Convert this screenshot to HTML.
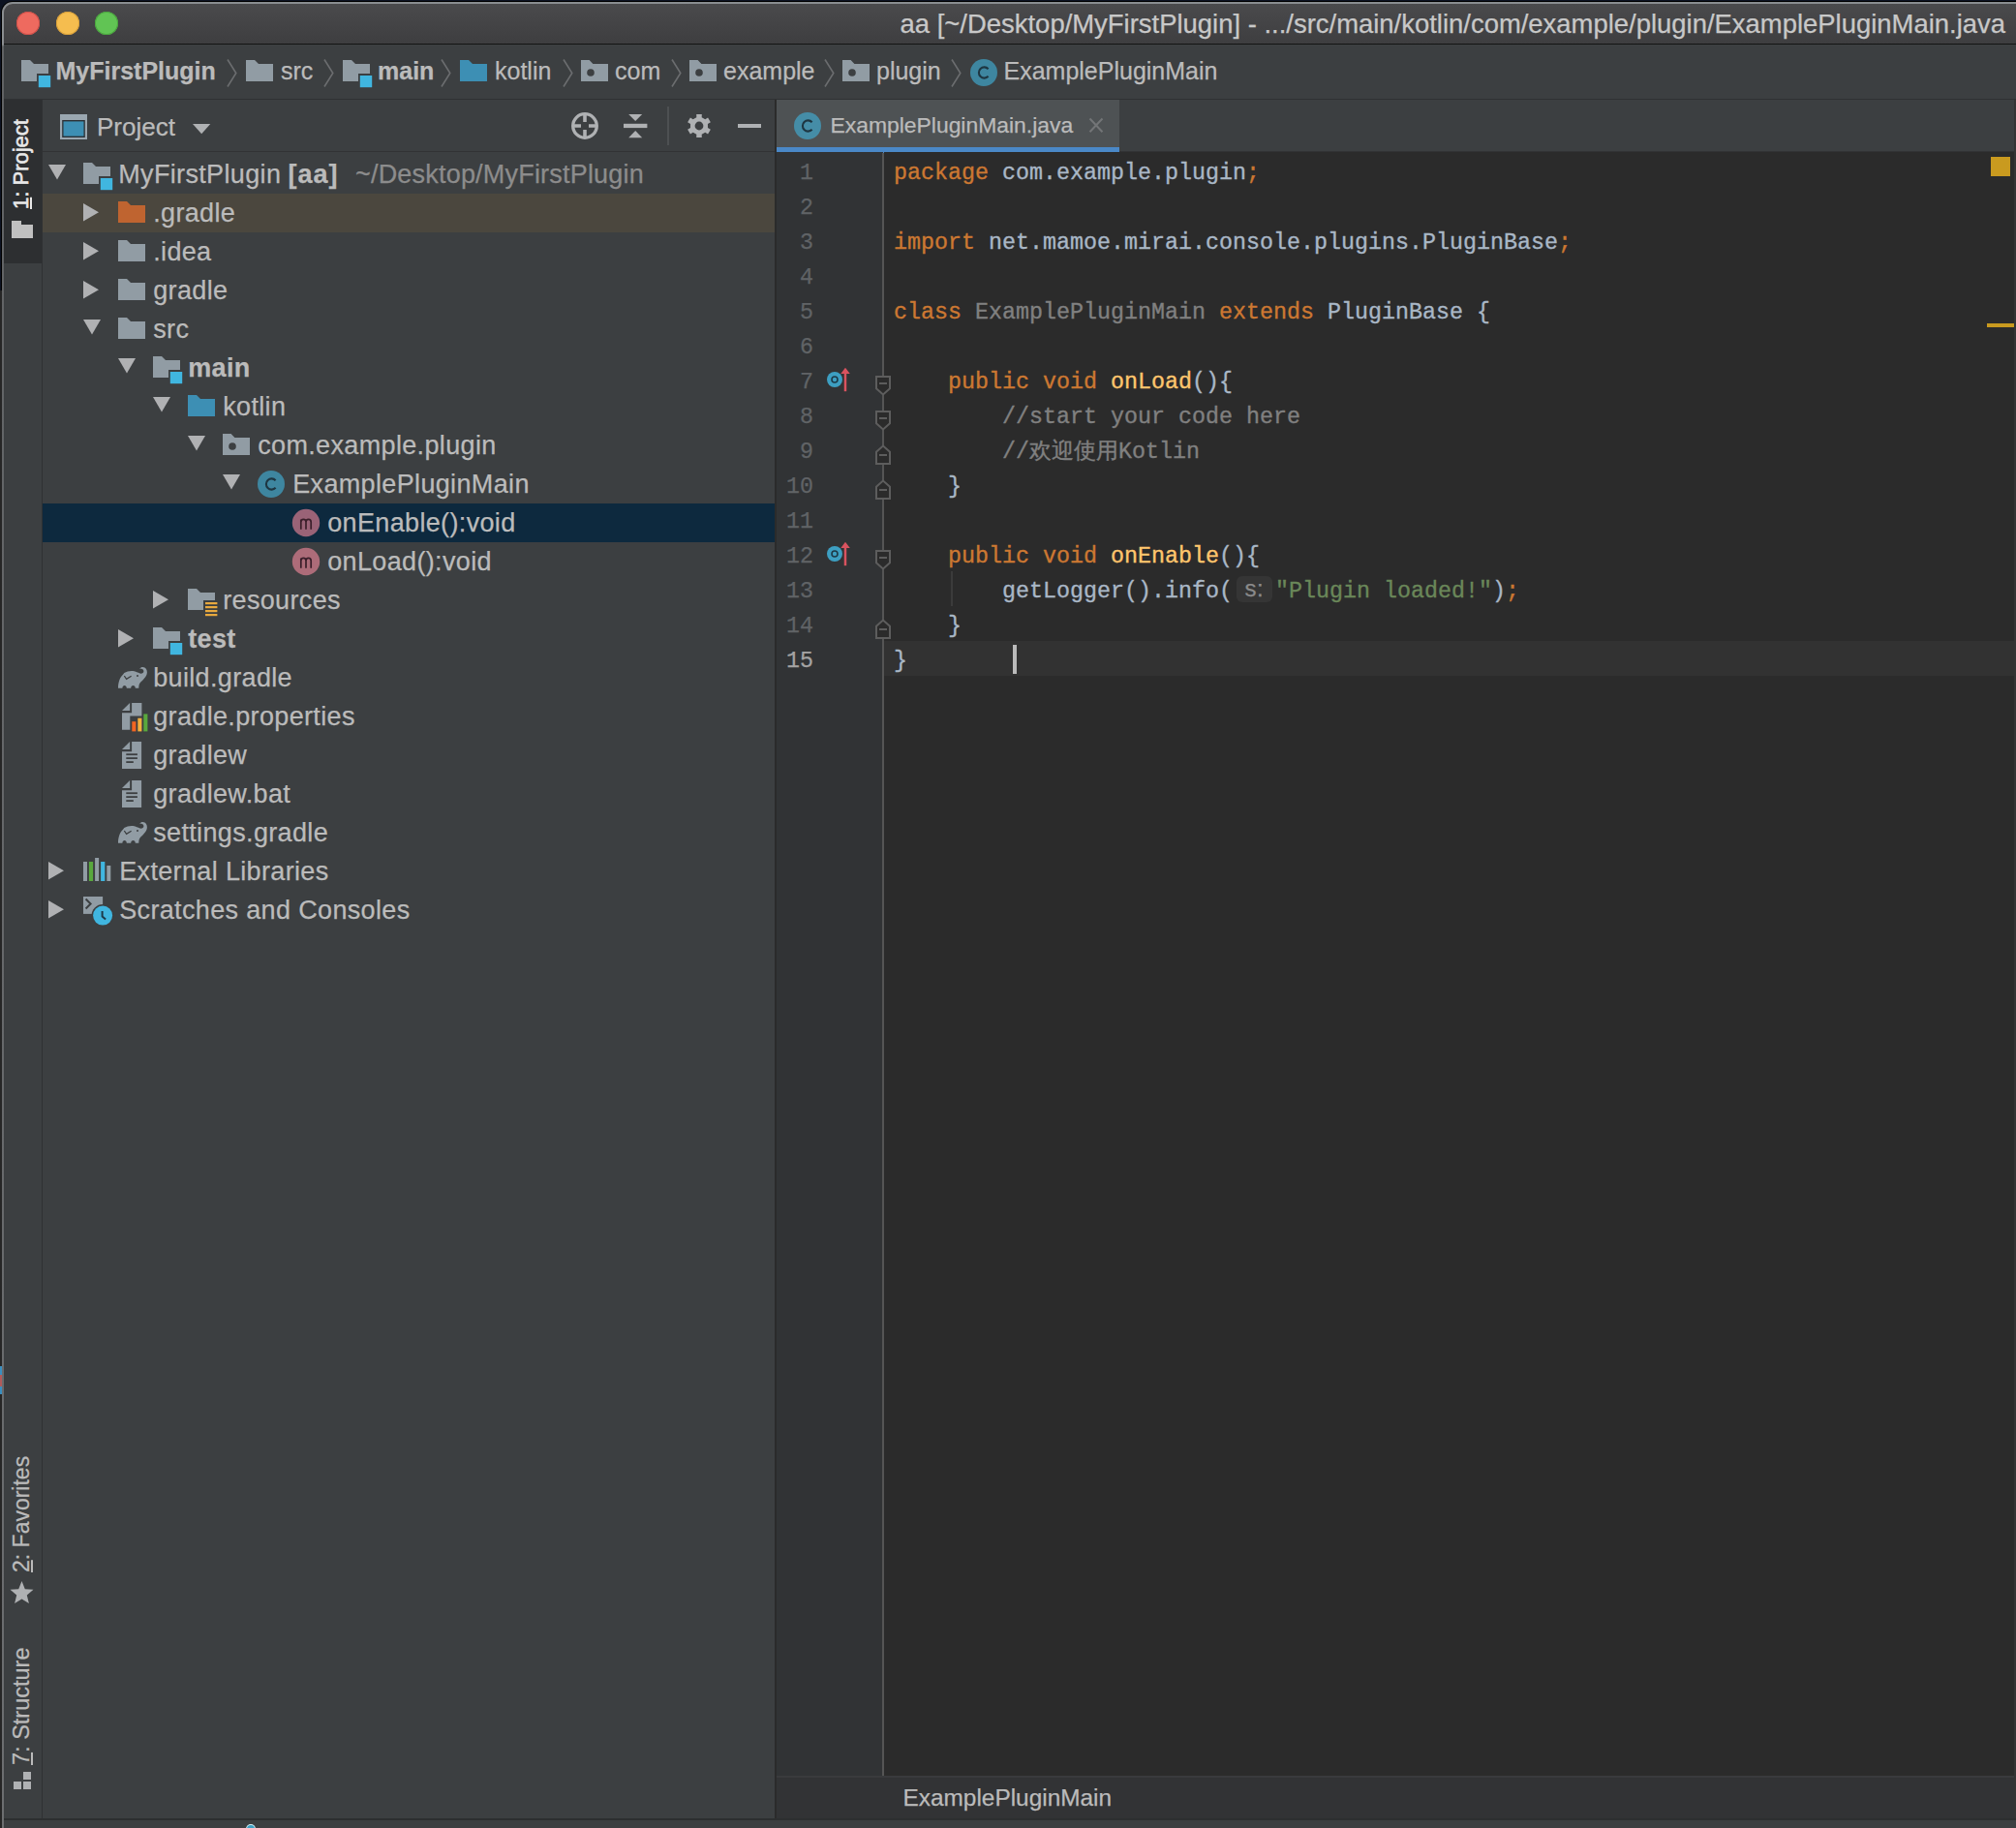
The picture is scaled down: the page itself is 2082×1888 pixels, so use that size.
<!DOCTYPE html>
<html><head><meta charset="utf-8"><style>
*{margin:0;padding:0;box-sizing:border-box}
html,body{width:2082px;height:1888px;overflow:hidden;background:#0d1322}
body{position:relative;font-family:"Liberation Sans",sans-serif;color:#bbbbbb}
.a{position:absolute}
.t{position:absolute;white-space:pre;line-height:1;-webkit-text-stroke:0.25px currentColor}
svg{position:absolute;overflow:visible}
.b{font-weight:bold}
.mono{font-family:"Liberation Mono",monospace}
.k{color:#cc7832}.m{color:#ffc66d}.s{color:#6a8759}.c{color:#808080}.u{color:#808080}
</style></head><body>
<div class="a" style="left:1px;top:1px;width:2081px;height:1887px;background:#000;border-radius:12px 0 0 0"></div>
<div class="a" style="left:2px;top:2px;width:2080px;height:1886px;background:linear-gradient(#8a8d90 0px,#8a8d90 44px,#606264 46px,#6c6e70 1888px);border-radius:11px 0 0 0"></div>
<div class="a" style="left:0px;top:300px;width:1.5px;height:1588px;background:#262626;"></div>
<div class="a" style="left:0px;top:1411px;width:1.5px;height:9px;background:#3a8fc0;"></div>
<div class="a" style="left:0px;top:1420px;width:1.5px;height:12px;background:#b05a5a;"></div>
<div class="a" style="left:0px;top:1432px;width:1.5px;height:8px;background:#3a8fc0;"></div>
<div class="a" style="left:4px;top:4px;width:2078px;height:40.5px;background:linear-gradient(#4a4a4c,#3e3e40);border-radius:9px 0 0 0"></div>
<div class="a" style="left:4px;top:44.5px;width:2078px;height:1.5px;background:#141414;"></div>
<div class="a" style="left:4px;top:46px;width:2076px;height:56px;background:#3c3f41;"></div>
<div class="a" style="left:2080px;top:46px;width:2px;height:57px;background:#3c3f41;"></div>
<div class="a" style="left:4px;top:102px;width:2078px;height:1px;background:#2f3133;"></div>
<div class="a" style="left:4px;top:103px;width:39px;height:1776px;background:#3c3f41;"></div>
<div class="a" style="left:4px;top:103px;width:39px;height:169px;background:#2d2f31;"></div>
<div class="a" style="left:43px;top:103px;width:1px;height:1776px;background:#2f3133;"></div>
<div class="a" style="left:44px;top:103px;width:756px;height:1776px;background:#3c3f41;"></div>
<div class="a" style="left:44px;top:155.5px;width:756px;height:1.5px;background:#323335;"></div>
<div class="a" style="left:800px;top:103px;width:2px;height:1776px;background:#2b2b2b;"></div>
<div class="a" style="left:802px;top:103px;width:1278px;height:54px;background:#3c3f41;"></div>
<div class="a" style="left:802px;top:155.5px;width:1278px;height:1.5px;background:#323335;"></div>
<div class="a" style="left:802px;top:103px;width:354px;height:49px;background:#4e5254;"></div>
<div class="a" style="left:802px;top:152px;width:354px;height:6px;background:#4a88c7;"></div>
<div class="a" style="left:802px;top:157px;width:110px;height:1677px;background:#313335;"></div>
<div class="a" style="left:913px;top:157px;width:1167px;height:1677px;background:#2b2b2b;"></div>
<div class="a" style="left:911px;top:158px;width:2px;height:1676px;background:#555555;"></div>
<div class="a" style="left:2080px;top:103px;width:2px;height:1776px;background:#343434;"></div>
<div class="a" style="left:802px;top:1834px;width:1278px;height:45px;background:#323335;"></div>
<div class="a" style="left:802px;top:1834px;width:1278px;height:2px;background:#3a3b3d;"></div>
<div class="a" style="left:4px;top:1879px;width:2078px;height:9px;background:#3c3f41;"></div>
<div class="a" style="left:4px;top:1878px;width:2078px;height:2px;background:#2d2f30;"></div>
<div class="a" style="left:17px;top:12px;width:24px;height:24px;background:#ee6a5f;border-radius:50%;box-shadow:inset 0 0 0 1px #d0504a"></div>
<div class="a" style="left:58px;top:12px;width:24px;height:24px;background:#f5bd4f;border-radius:50%;box-shadow:inset 0 0 0 1px #d9a03a"></div>
<div class="a" style="left:98px;top:12px;width:24px;height:24px;background:#61c454;border-radius:50%;box-shadow:inset 0 0 0 1px #4aa53e"></div>
<div class="t" style="left:0.00px;top:10.76px;font-size:27.45px;color:#c8c8c8;font-weight:normal;left:auto;right:11px">aa [~/Desktop/MyFirstPlugin] - .../src/main/kotlin/com/example/plugin/ExamplePluginMain.java</div>
<svg style="left:22px;top:62px" width="31" height="29" viewBox="0 0 31 29"><path d="M0 0H9L13 4H28V22H0Z" fill="#919ca4"/><rect x="16" y="14" width="15.5" height="15.5" fill="#3c3f41"/><rect x="17.8" y="16" width="12.4" height="12.2" fill="#40b6e0"/></svg>
<div class="t" style="left:57.50px;top:60.84px;font-size:25px;color:#bbbbbb;font-weight:bold;">MyFirstPlugin</div>
<svg style="left:234px;top:60.5px" width="11" height="29" viewBox="0 0 11 29"><path d="M1 0.5L9.8 14.5L1 28.5" fill="none" stroke="#6b6d6f" stroke-width="1.6"/></svg>
<svg style="left:254px;top:62px" width="28" height="22" viewBox="0 0 28 22"><path d="M0 0H9L13 4H28V22H0Z" fill="#919ca4"/></svg>
<div class="t" style="left:290.00px;top:60.84px;font-size:25px;color:#bbbbbb;font-weight:normal;">src</div>
<svg style="left:334px;top:60.5px" width="11" height="29" viewBox="0 0 11 29"><path d="M1 0.5L9.8 14.5L1 28.5" fill="none" stroke="#6b6d6f" stroke-width="1.6"/></svg>
<svg style="left:354px;top:62px" width="31" height="29" viewBox="0 0 31 29"><path d="M0 0H9L13 4H28V22H0Z" fill="#919ca4"/><rect x="16" y="14" width="15.5" height="15.5" fill="#3c3f41"/><rect x="17.8" y="16" width="12.4" height="12.2" fill="#40b6e0"/></svg>
<div class="t" style="left:390.00px;top:60.84px;font-size:25px;color:#bbbbbb;font-weight:bold;">main</div>
<svg style="left:455px;top:60.5px" width="11" height="29" viewBox="0 0 11 29"><path d="M1 0.5L9.8 14.5L1 28.5" fill="none" stroke="#6b6d6f" stroke-width="1.6"/></svg>
<svg style="left:475px;top:62px" width="28" height="22" viewBox="0 0 28 22"><path d="M0 0H9L13 4H28V22H0Z" fill="#3d8fb4"/></svg>
<div class="t" style="left:511.00px;top:60.84px;font-size:25px;color:#bbbbbb;font-weight:normal;">kotlin</div>
<svg style="left:581px;top:60.5px" width="11" height="29" viewBox="0 0 11 29"><path d="M1 0.5L9.8 14.5L1 28.5" fill="none" stroke="#6b6d6f" stroke-width="1.6"/></svg>
<svg style="left:600px;top:62px" width="28" height="22" viewBox="0 0 28 22"><path d="M0 0H8.6L12.4 3.9H28V22H0Z" fill="#919ca4"/><circle cx="10" cy="13" r="3.8" fill="#3c3f41"/></svg>
<div class="t" style="left:635.00px;top:60.84px;font-size:25px;color:#bbbbbb;font-weight:normal;">com</div>
<svg style="left:692.5px;top:60.5px" width="11" height="29" viewBox="0 0 11 29"><path d="M1 0.5L9.8 14.5L1 28.5" fill="none" stroke="#6b6d6f" stroke-width="1.6"/></svg>
<svg style="left:712px;top:62px" width="28" height="22" viewBox="0 0 28 22"><path d="M0 0H8.6L12.4 3.9H28V22H0Z" fill="#919ca4"/><circle cx="10" cy="13" r="3.8" fill="#3c3f41"/></svg>
<div class="t" style="left:747.00px;top:60.84px;font-size:25px;color:#bbbbbb;font-weight:normal;">example</div>
<svg style="left:851px;top:60.5px" width="11" height="29" viewBox="0 0 11 29"><path d="M1 0.5L9.8 14.5L1 28.5" fill="none" stroke="#6b6d6f" stroke-width="1.6"/></svg>
<svg style="left:870px;top:62px" width="28" height="22" viewBox="0 0 28 22"><path d="M0 0H8.6L12.4 3.9H28V22H0Z" fill="#919ca4"/><circle cx="10" cy="13" r="3.8" fill="#3c3f41"/></svg>
<div class="t" style="left:905.00px;top:60.84px;font-size:25px;color:#bbbbbb;font-weight:normal;">plugin</div>
<svg style="left:982px;top:60.5px" width="11" height="29" viewBox="0 0 11 29"><path d="M1 0.5L9.8 14.5L1 28.5" fill="none" stroke="#6b6d6f" stroke-width="1.6"/></svg>
<svg style="left:1002px;top:61px" width="28" height="28" viewBox="0 0 28 28"><circle cx="14" cy="14" r="14" fill="#40b6e0" fill-opacity="0.6"/><path d="M18.6 10.2A5.6 5.6 0 1 0 18.6 17.8" fill="none" stroke="#1e3642" stroke-width="2.1"/></svg>
<div class="t" style="left:1036.50px;top:60.84px;font-size:25px;color:#bbbbbb;font-weight:normal;">ExamplePluginMain</div>
<svg style="left:62px;top:118px" width="28" height="26" viewBox="0 0 28 26"><rect x="0" y="0" width="28" height="26" fill="#9aa7b0"/><rect x="2.2" y="6" width="23.6" height="18" fill="#2b3035"/><rect x="3.5" y="7.4" width="21" height="15.2" fill="#3d8fb4"/></svg>
<div class="t" style="left:100.00px;top:117.69px;font-size:26px;color:#bbbbbb;font-weight:normal;">Project</div>
<svg style="left:198.7px;top:127.8px" width="18.3" height="10.2" viewBox="0 0 18.3 10.2"><path d="M0 0H18.3L9.15 10.2Z" fill="#afb1b3"/></svg>
<svg style="left:590px;top:116px" width="28" height="28" viewBox="0 0 28 28"><circle cx="14" cy="14" r="12.3" fill="none" stroke="#afb1b3" stroke-width="3.3"/><path d="M14 2V10M14 18V26M2 14H10M18 14H26" stroke="#afb1b3" stroke-width="3.6"/></svg>
<svg style="left:643.8px;top:117.9px" width="24.4" height="24.2" viewBox="0 0 24.4 24.2"><path d="M5.2 0H19.2L12.2 7Z" fill="#afb1b3"/><rect x="0" y="9.8" width="24.4" height="4.3" fill="#afb1b3"/><path d="M5.2 24.2H19.2L12.2 17.1Z" fill="#afb1b3"/></svg>
<div class="a" style="left:688.5px;top:110px;width:2px;height:40px;background:#4d5052;"></div>
<svg style="left:708px;top:116px" width="28" height="28" viewBox="0 0 28 28"><path d="M11.21 1.92 L16.79 1.92 L16.69 5.20 L20.27 7.27 L23.07 5.54 L25.86 10.37 L22.96 11.93 L22.96 16.07 L25.86 17.63 L23.07 22.46 L20.27 20.73 L16.69 22.80 L16.79 26.08 L11.21 26.08 L11.31 22.80 L7.73 20.73 L4.93 22.46 L2.14 17.63 L5.04 16.07 L5.04 11.93 L2.14 10.37 L4.93 5.54 L7.73 7.27 L11.31 5.20Z" fill="#afb1b3"/><circle cx="14" cy="14" r="4.4" fill="#3c3f41"/></svg>
<div class="a" style="left:762px;top:127.7px;width:24.2px;height:4.3px;background:#afb1b3;"></div>
<svg style="left:820px;top:115.69999999999999px" width="28" height="28" viewBox="0 0 28 28"><circle cx="14" cy="14" r="14" fill="#40b6e0" fill-opacity="0.6"/><path d="M18.6 10.2A5.6 5.6 0 1 0 18.6 17.8" fill="none" stroke="#1e3642" stroke-width="2.1"/></svg>
<div class="t" style="left:857.50px;top:118.22px;font-size:22.9px;color:#bbbbbb;font-weight:normal;">ExamplePluginMain.java</div>
<svg style="left:1125px;top:122.4px" width="14" height="14.7" viewBox="0 0 14 14.7"><path d="M0.5 0.5L13.5 14.2M13.5 0.5L0.5 14.2" stroke="#737577" stroke-width="2"/></svg>
<div class="t" style="left:10.91px;top:216px;font-size:22px;color:#e8e8e8;-webkit-text-stroke:0.6px #e8e8e8;transform-origin:0 0;transform:rotate(-90deg);line-height:1"><span style="text-decoration:underline">1</span>: Project</div>
<svg style="left:12px;top:228px" width="22" height="18" viewBox="0 0 22 18"><path d="M0 0H10V4H22V18H0Z" fill="#c0c0c0"/></svg>
<div class="t" style="left:10.80px;top:1624px;font-size:23px;color:#bbbbbb;transform-origin:0 0;transform:rotate(-90deg);line-height:1"><span style="text-decoration:underline">2</span>: Favorites</div>
<svg style="left:10px;top:1633px" width="25" height="24" viewBox="0 0 25 24"><path d="M12.5 0L15.8 8.2L24.5 8.8L17.8 14.4L19.9 23L12.5 18.4L5.1 23L7.2 14.4L0.5 8.8L9.2 8.2Z" fill="#afb1b3"/></svg>
<div class="t" style="left:10.74px;top:1822.5px;font-size:23.5px;color:#bbbbbb;transform-origin:0 0;transform:rotate(-90deg);line-height:1"><span style="text-decoration:underline">7</span>: Structure</div>
<svg style="left:14px;top:1828px" width="19" height="22" viewBox="0 0 19 22"><rect x="0" y="12" width="8" height="8" fill="#afb1b3"/><rect x="10" y="2" width="8" height="8" fill="#afb1b3"/><rect x="10" y="12" width="8" height="8" fill="#afb1b3"/></svg>
<div class="a" style="left:44px;top:200px;width:756px;height:40px;background:#4b473e;"></div>
<div class="a" style="left:44px;top:520px;width:756px;height:40px;background:#0d293e;"></div>
<svg style="left:50px;top:170.3px" width="18" height="15.5" viewBox="0 0 18 15.5"><path d="M0 0H18L9 15.5Z" fill="#b0b1b3"/></svg>
<svg style="left:86px;top:168px" width="31" height="29" viewBox="0 0 31 29"><path d="M0 0H9L13 4H28V22H0Z" fill="#919ca4"/><rect x="16" y="14" width="15.5" height="15.5" fill="#3c3f41"/><rect x="17.8" y="16" width="12.4" height="12.2" fill="#40b6e0"/></svg>
<div class="t" style="left:122.20px;top:167.44px;font-size:27px;color:#bbbbbb;font-weight:normal;letter-spacing:0.35px;">MyFirstPlugin</div>
<div class="t" style="left:297.50px;top:167.44px;font-size:27px;color:#bbbbbb;font-weight:bold;letter-spacing:1px">[aa]</div>
<div class="t" style="left:367.00px;top:167.44px;font-size:27px;color:#8c8c8c;font-weight:normal;letter-spacing:0.2px">~/Desktop/MyFirstPlugin</div>
<svg style="left:86px;top:209.8px" width="16" height="18.4" viewBox="0 0 16 18.4"><path d="M0 0L16 9.2L0 18.4Z" fill="#b0b1b3"/></svg>
<svg style="left:122px;top:208px" width="28" height="22" viewBox="0 0 28 22"><path d="M0 0H9L13 4H28V22H0Z" fill="#bf6430"/></svg>
<div class="t" style="left:158.20px;top:207.44px;font-size:27px;color:#bbbbbb;font-weight:normal;letter-spacing:0.35px;">.gradle</div>
<svg style="left:86px;top:249.8px" width="16" height="18.4" viewBox="0 0 16 18.4"><path d="M0 0L16 9.2L0 18.4Z" fill="#b0b1b3"/></svg>
<svg style="left:122px;top:248px" width="28" height="22" viewBox="0 0 28 22"><path d="M0 0H9L13 4H28V22H0Z" fill="#919ca4"/></svg>
<div class="t" style="left:158.20px;top:247.44px;font-size:27px;color:#bbbbbb;font-weight:normal;letter-spacing:0.35px;">.idea</div>
<svg style="left:86px;top:289.8px" width="16" height="18.4" viewBox="0 0 16 18.4"><path d="M0 0L16 9.2L0 18.4Z" fill="#b0b1b3"/></svg>
<svg style="left:122px;top:288px" width="28" height="22" viewBox="0 0 28 22"><path d="M0 0H9L13 4H28V22H0Z" fill="#919ca4"/></svg>
<div class="t" style="left:158.20px;top:287.44px;font-size:27px;color:#bbbbbb;font-weight:normal;letter-spacing:0.35px;">gradle</div>
<svg style="left:86px;top:330.3px" width="18" height="15.5" viewBox="0 0 18 15.5"><path d="M0 0H18L9 15.5Z" fill="#b0b1b3"/></svg>
<svg style="left:122px;top:328px" width="28" height="22" viewBox="0 0 28 22"><path d="M0 0H9L13 4H28V22H0Z" fill="#919ca4"/></svg>
<div class="t" style="left:158.20px;top:327.44px;font-size:27px;color:#bbbbbb;font-weight:normal;letter-spacing:0.35px;">src</div>
<svg style="left:122px;top:370.3px" width="18" height="15.5" viewBox="0 0 18 15.5"><path d="M0 0H18L9 15.5Z" fill="#b0b1b3"/></svg>
<svg style="left:158px;top:368px" width="31" height="29" viewBox="0 0 31 29"><path d="M0 0H9L13 4H28V22H0Z" fill="#919ca4"/><rect x="16" y="14" width="15.5" height="15.5" fill="#3c3f41"/><rect x="17.8" y="16" width="12.4" height="12.2" fill="#40b6e0"/></svg>
<div class="t" style="left:194.20px;top:367.44px;font-size:27px;color:#bbbbbb;font-weight:bold;letter-spacing:0.35px;">main</div>
<svg style="left:158px;top:410.3px" width="18" height="15.5" viewBox="0 0 18 15.5"><path d="M0 0H18L9 15.5Z" fill="#b0b1b3"/></svg>
<svg style="left:194px;top:408px" width="28" height="22" viewBox="0 0 28 22"><path d="M0 0H9L13 4H28V22H0Z" fill="#3d8fb4"/></svg>
<div class="t" style="left:230.20px;top:407.44px;font-size:27px;color:#bbbbbb;font-weight:normal;letter-spacing:0.35px;">kotlin</div>
<svg style="left:194px;top:450.3px" width="18" height="15.5" viewBox="0 0 18 15.5"><path d="M0 0H18L9 15.5Z" fill="#b0b1b3"/></svg>
<svg style="left:230px;top:448px" width="28" height="22" viewBox="0 0 28 22"><path d="M0 0H8.6L12.4 3.9H28V22H0Z" fill="#919ca4"/><circle cx="10" cy="13" r="3.8" fill="#3c3f41"/></svg>
<div class="t" style="left:266.20px;top:447.44px;font-size:27px;color:#bbbbbb;font-weight:normal;letter-spacing:0.35px;">com.example.plugin</div>
<svg style="left:230px;top:490.3px" width="18" height="15.5" viewBox="0 0 18 15.5"><path d="M0 0H18L9 15.5Z" fill="#b0b1b3"/></svg>
<svg style="left:266px;top:486px" width="28" height="28" viewBox="0 0 28 28"><circle cx="14" cy="14" r="14" fill="#40b6e0" fill-opacity="0.6"/><path d="M18.6 10.2A5.6 5.6 0 1 0 18.6 17.8" fill="none" stroke="#1e3642" stroke-width="2.1"/></svg>
<div class="t" style="left:302.20px;top:487.44px;font-size:27px;color:#bbbbbb;font-weight:normal;letter-spacing:0.35px;">ExamplePluginMain</div>
<svg style="left:302px;top:526px" width="28" height="28" viewBox="0 0 28 28"><circle cx="14" cy="14" r="14.2" fill="#f98b9e" fill-opacity="0.6"/><path d="M6.6 20V9.6M6.6 12.5C6.6 10.5 7.6 9.6 9.2 9.6C10.8 9.6 11.8 10.5 11.8 12.5V20M11.8 12.5C11.8 10.5 12.8 9.6 14.4 9.6C16 9.6 17 10.5 17 12.5V20" transform="translate(2.2,0.8)" fill="none" stroke="#3b1f2a" stroke-width="1.7"/></svg>
<div class="t" style="left:338.20px;top:527.44px;font-size:27px;color:#bbbbbb;font-weight:normal;letter-spacing:0.35px;">onEnable():void</div>
<svg style="left:302px;top:566px" width="28" height="28" viewBox="0 0 28 28"><circle cx="14" cy="14" r="14.2" fill="#f98b9e" fill-opacity="0.6"/><path d="M6.6 20V9.6M6.6 12.5C6.6 10.5 7.6 9.6 9.2 9.6C10.8 9.6 11.8 10.5 11.8 12.5V20M11.8 12.5C11.8 10.5 12.8 9.6 14.4 9.6C16 9.6 17 10.5 17 12.5V20" transform="translate(2.2,0.8)" fill="none" stroke="#3b1f2a" stroke-width="1.7"/></svg>
<div class="t" style="left:338.20px;top:567.44px;font-size:27px;color:#bbbbbb;font-weight:normal;letter-spacing:0.35px;">onLoad():void</div>
<svg style="left:158px;top:610px" width="16" height="18.4" viewBox="0 0 16 18.4"><path d="M0 0L16 9.2L0 18.4Z" fill="#b0b1b3"/></svg>
<svg style="left:194px;top:608px" width="31" height="29" viewBox="0 0 31 29"><path d="M0 0H9L13 4H28V22H0Z" fill="#919ca4"/><rect x="16" y="12" width="16" height="18" fill="#3c3f41"/><g fill="#e8a93e"><rect x="18" y="14" width="12.4" height="2.2"/><rect x="18" y="18" width="12.4" height="2.2"/><rect x="18" y="22" width="12.4" height="2.2"/><rect x="18" y="26" width="12.4" height="2.2"/></g></svg>
<div class="t" style="left:230.20px;top:607.44px;font-size:27px;color:#bbbbbb;font-weight:normal;letter-spacing:0.35px;">resources</div>
<svg style="left:122px;top:649.8px" width="16" height="18.4" viewBox="0 0 16 18.4"><path d="M0 0L16 9.2L0 18.4Z" fill="#b0b1b3"/></svg>
<svg style="left:158px;top:648px" width="31" height="29" viewBox="0 0 31 29"><path d="M0 0H9L13 4H28V22H0Z" fill="#919ca4"/><rect x="16" y="14" width="15.5" height="15.5" fill="#3c3f41"/><rect x="17.8" y="16" width="12.4" height="12.2" fill="#40b6e0"/></svg>
<div class="t" style="left:194.20px;top:647.44px;font-size:27px;color:#bbbbbb;font-weight:bold;letter-spacing:0.35px;">test</div>
<svg style="left:116px;top:683px" width="42" height="32" viewBox="0 0 42 32"><path d="M6 27.7C6 21.5 8 16.5 11.2 13.6L12.3 11.9C15 10.3 18.5 9.6 21.5 10C24.5 10.4 26.5 11.8 28.5 12.5C30.5 13 32.4 12 32.4 10.2C32.4 8.4 30.5 7.4 28 7.6C29.2 6.2 30.5 5.8 31.5 5.9C34.5 6.2 36 8.5 35.9 11.5C35.8 16 31 19.5 28.5 22.5C27.6 23.8 27.3 25.5 27.3 27.7L23.8 27.7C23.8 26 22.7 25 21.5 25C20.3 25 19.2 26 19.2 27.7L14.8 27.7C14.8 26 13.7 25 12.6 25C11.5 25 10.4 26 10.4 27.7Z" fill="#919ca4"/><path d="M12.3 15L14.6 18.3L19.6 15.2" fill="none" stroke="#3c3f41" stroke-width="1.3"/><circle cx="26" cy="15" r="1" fill="#3c3f41"/></svg>
<div class="t" style="left:158.20px;top:687.44px;font-size:27px;color:#bbbbbb;font-weight:normal;letter-spacing:0.35px;">build.gradle</div>
<svg style="left:125.6px;top:726.3px" width="27" height="30" viewBox="0 0 27 30"><path d="M10.1 0H20.4V27.7H0V10.3H10.1Z" fill="#919ca4"/><path d="M0 7.9L8.1 0V7.9Z" fill="#919ca4"/><rect x="8.3" y="13.5" width="19" height="17" fill="#3c3f41"/><rect x="10.3" y="19.2" width="4.1" height="10.2" fill="#f26522"/><rect x="16.3" y="15.7" width="4.1" height="13.7" fill="#f4af3d"/><rect x="22.3" y="11.4" width="4.1" height="18" fill="#59a83d"/></svg>
<div class="t" style="left:158.20px;top:727.44px;font-size:27px;color:#bbbbbb;font-weight:normal;letter-spacing:0.35px;">gradle.properties</div>
<svg style="left:125.9px;top:765.9px" width="21" height="28" viewBox="0 0 21 28"><path d="M10.1 0H20.1V28H0V10.3H10.1Z" fill="#919ca4"/><path d="M0 7.9L8.1 0V7.9Z" fill="#919ca4"/><g fill="#3c3f41"><rect x="4.3" y="12.3" width="11.6" height="1.8"/><rect x="4.3" y="16.2" width="11.6" height="1.8"/><rect x="4.3" y="20.2" width="7.5" height="1.8"/></g></svg>
<div class="t" style="left:158.20px;top:767.44px;font-size:27px;color:#bbbbbb;font-weight:normal;letter-spacing:0.35px;">gradlew</div>
<svg style="left:125.9px;top:805.9px" width="21" height="28" viewBox="0 0 21 28"><path d="M10.1 0H20.1V28H0V10.3H10.1Z" fill="#919ca4"/><path d="M0 7.9L8.1 0V7.9Z" fill="#919ca4"/><g fill="#3c3f41"><rect x="4.3" y="12.3" width="11.6" height="1.8"/><rect x="4.3" y="16.2" width="11.6" height="1.8"/><rect x="4.3" y="20.2" width="7.5" height="1.8"/></g></svg>
<div class="t" style="left:158.20px;top:807.44px;font-size:27px;color:#bbbbbb;font-weight:normal;letter-spacing:0.35px;">gradlew.bat</div>
<svg style="left:116px;top:843px" width="42" height="32" viewBox="0 0 42 32"><path d="M6 27.7C6 21.5 8 16.5 11.2 13.6L12.3 11.9C15 10.3 18.5 9.6 21.5 10C24.5 10.4 26.5 11.8 28.5 12.5C30.5 13 32.4 12 32.4 10.2C32.4 8.4 30.5 7.4 28 7.6C29.2 6.2 30.5 5.8 31.5 5.9C34.5 6.2 36 8.5 35.9 11.5C35.8 16 31 19.5 28.5 22.5C27.6 23.8 27.3 25.5 27.3 27.7L23.8 27.7C23.8 26 22.7 25 21.5 25C20.3 25 19.2 26 19.2 27.7L14.8 27.7C14.8 26 13.7 25 12.6 25C11.5 25 10.4 26 10.4 27.7Z" fill="#919ca4"/><path d="M12.3 15L14.6 18.3L19.6 15.2" fill="none" stroke="#3c3f41" stroke-width="1.3"/><circle cx="26" cy="15" r="1" fill="#3c3f41"/></svg>
<div class="t" style="left:158.20px;top:847.44px;font-size:27px;color:#bbbbbb;font-weight:normal;letter-spacing:0.35px;">settings.gradle</div>
<svg style="left:50px;top:889.8px" width="16" height="18.4" viewBox="0 0 16 18.4"><path d="M0 0L16 9.2L0 18.4Z" fill="#b0b1b3"/></svg>
<svg style="left:86px;top:886px" width="29" height="24" viewBox="0 0 29 24"><rect x="0" y="4" width="4" height="20" fill="#919ca4"/><rect x="5.9" y="4" width="4.2" height="20" fill="#59a83d"/><rect x="12.1" y="0" width="4" height="24" fill="#919ca4"/><rect x="18.1" y="4" width="4.2" height="20" fill="#40b6e0"/><rect x="24.3" y="8" width="4" height="16" fill="#919ca4"/></svg>
<div class="t" style="left:123.20px;top:887.44px;font-size:27px;color:#bbbbbb;font-weight:normal;letter-spacing:0.35px;">External Libraries</div>
<svg style="left:50px;top:930px" width="16" height="18.4" viewBox="0 0 16 18.4"><path d="M0 0L16 9.2L0 18.4Z" fill="#b0b1b3"/></svg>
<svg style="left:86px;top:926px" width="32" height="32" viewBox="0 0 32 32"><rect x="0" y="0" width="20.1" height="17.9" fill="#919ca4"/><circle cx="20.1" cy="19.6" r="11.6" fill="#3c3f41"/><circle cx="20.1" cy="19.6" r="10" fill="#40b6e0"/><path d="M2.6 2.5L7.6 7.5L2.6 12.5" fill="none" stroke="#3c3f41" stroke-width="2"/><path d="M19.6 15V20.5L23.1 23.5" fill="none" stroke="#1d3a4a" stroke-width="2"/></svg>
<div class="t" style="left:123.20px;top:927.44px;font-size:27px;color:#bbbbbb;font-weight:normal;letter-spacing:0.35px;">Scratches and Consoles</div>
<div class="a" style="left:913px;top:662px;width:1167px;height:36px;background:#323232;"></div>
<div class="t mono" style="left:740px;width:100px;text-align:right;top:168.12px;font-size:23.33px;color:#606366">1</div>
<div class="t" style="left:923.00px;top:168.12px;font-size:23.33px;color:#a9b7c6;font-weight:normal;font-family:'Liberation Mono',monospace;-webkit-text-stroke:0.35px currentColor;"><span class="k">package</span> com.example.plugin<span class="k">;</span></div>
<div class="t mono" style="left:740px;width:100px;text-align:right;top:204.12px;font-size:23.33px;color:#606366">2</div>
<div class="t mono" style="left:740px;width:100px;text-align:right;top:240.12px;font-size:23.33px;color:#606366">3</div>
<div class="t" style="left:923.00px;top:240.12px;font-size:23.33px;color:#a9b7c6;font-weight:normal;font-family:'Liberation Mono',monospace;-webkit-text-stroke:0.35px currentColor;"><span class="k">import</span> net.mamoe.mirai.console.plugins.PluginBase<span class="k">;</span></div>
<div class="t mono" style="left:740px;width:100px;text-align:right;top:276.12px;font-size:23.33px;color:#606366">4</div>
<div class="t mono" style="left:740px;width:100px;text-align:right;top:312.12px;font-size:23.33px;color:#606366">5</div>
<div class="t" style="left:923.00px;top:312.12px;font-size:23.33px;color:#a9b7c6;font-weight:normal;font-family:'Liberation Mono',monospace;-webkit-text-stroke:0.35px currentColor;"><span class="k">class</span> <span style="color:#808080">ExamplePluginMain</span> <span class="k">extends</span> PluginBase {</div>
<div class="t mono" style="left:740px;width:100px;text-align:right;top:348.12px;font-size:23.33px;color:#606366">6</div>
<div class="t mono" style="left:740px;width:100px;text-align:right;top:384.12px;font-size:23.33px;color:#606366">7</div>
<div class="t" style="left:923.00px;top:384.12px;font-size:23.33px;color:#a9b7c6;font-weight:normal;font-family:'Liberation Mono',monospace;-webkit-text-stroke:0.35px currentColor;">    <span class="k">public void</span> <span class="m">onLoad</span>(){</div>
<div class="t mono" style="left:740px;width:100px;text-align:right;top:420.12px;font-size:23.33px;color:#606366">8</div>
<div class="t" style="left:923.00px;top:420.12px;font-size:23.33px;color:#a9b7c6;font-weight:normal;font-family:'Liberation Mono',monospace;-webkit-text-stroke:0.35px currentColor;">        <span class="c">//start your code here</span></div>
<div class="t mono" style="left:740px;width:100px;text-align:right;top:456.12px;font-size:23.33px;color:#606366">9</div>
<div class="t" style="left:923.00px;top:456.12px;font-size:23.33px;color:#a9b7c6;font-weight:normal;font-family:'Liberation Mono',monospace;-webkit-text-stroke:0.35px currentColor;">        <span class="c">//欢迎使用Kotlin</span></div>
<div class="t mono" style="left:740px;width:100px;text-align:right;top:492.12px;font-size:23.33px;color:#606366">10</div>
<div class="t" style="left:923.00px;top:492.12px;font-size:23.33px;color:#a9b7c6;font-weight:normal;font-family:'Liberation Mono',monospace;-webkit-text-stroke:0.35px currentColor;">    }</div>
<div class="t mono" style="left:740px;width:100px;text-align:right;top:528.12px;font-size:23.33px;color:#606366">11</div>
<div class="t mono" style="left:740px;width:100px;text-align:right;top:564.12px;font-size:23.33px;color:#606366">12</div>
<div class="t" style="left:923.00px;top:564.12px;font-size:23.33px;color:#a9b7c6;font-weight:normal;font-family:'Liberation Mono',monospace;-webkit-text-stroke:0.35px currentColor;">    <span class="k">public void</span> <span class="m">onEnable</span>(){</div>
<div class="t mono" style="left:740px;width:100px;text-align:right;top:600.12px;font-size:23.33px;color:#606366">13</div>
<div class="t" style="left:923.00px;top:600.12px;font-size:23.33px;color:#a9b7c6;font-weight:normal;font-family:'Liberation Mono',monospace;-webkit-text-stroke:0.35px currentColor;">        getLogger().info( <span style="display:inline-block;width:30px"></span><span class="s">"Plugin loaded!"</span>)<span class="k">;</span></div>
<div class="t mono" style="left:740px;width:100px;text-align:right;top:636.12px;font-size:23.33px;color:#606366">14</div>
<div class="t" style="left:923.00px;top:636.12px;font-size:23.33px;color:#a9b7c6;font-weight:normal;font-family:'Liberation Mono',monospace;-webkit-text-stroke:0.35px currentColor;">    }</div>
<div class="t mono" style="left:740px;width:100px;text-align:right;top:672.12px;font-size:23.33px;color:#a4a3a3">15</div>
<div class="t" style="left:923.00px;top:672.12px;font-size:23.33px;color:#a9b7c6;font-weight:normal;font-family:'Liberation Mono',monospace;-webkit-text-stroke:0.35px currentColor;">}</div>
<svg style="left:853px;top:374px" width="27" height="32" viewBox="0 0 27 32"><circle cx="9" cy="18" r="8" fill="#3d9fc2"/><circle cx="9" cy="18" r="3" fill="none" stroke="#1d3a48" stroke-width="1.6"/><path d="M20 30.2V11" stroke="#d9535f" stroke-width="2.5"/><path d="M15.3 11.9L20 5.7L24.8 11.9Z" fill="#d9535f"/></svg>
<svg style="left:853px;top:554px" width="27" height="32" viewBox="0 0 27 32"><circle cx="9" cy="18" r="8" fill="#3d9fc2"/><circle cx="9" cy="18" r="3" fill="none" stroke="#1d3a48" stroke-width="1.6"/><path d="M20 30.2V11" stroke="#d9535f" stroke-width="2.5"/><path d="M15.3 11.9L20 5.7L24.8 11.9Z" fill="#d9535f"/></svg>
<svg style="left:904px;top:388px" width="16" height="20" viewBox="0 0 16 20"><path d="M1 1H15V13.3L8 19.4L1 13.3Z" fill="#2b2b2b" stroke="#5d5d5d" stroke-width="2"/><rect x="4" y="7" width="8" height="2" fill="#5d5d5d"/></svg>
<svg style="left:904px;top:424px" width="16" height="20" viewBox="0 0 16 20"><path d="M1 1H15V13.3L8 19.4L1 13.3Z" fill="#2b2b2b" stroke="#5d5d5d" stroke-width="2"/><rect x="4" y="7" width="8" height="2" fill="#5d5d5d"/></svg>
<svg style="left:904px;top:460px" width="16" height="20" viewBox="0 0 16 20"><path d="M1 19V6.7L8 0.6L15 6.7V19Z" fill="#2b2b2b" stroke="#5d5d5d" stroke-width="2"/><rect x="4" y="9" width="8" height="2" fill="#5d5d5d"/></svg>
<svg style="left:904px;top:496px" width="16" height="20" viewBox="0 0 16 20"><path d="M1 19V6.7L8 0.6L15 6.7V19Z" fill="#2b2b2b" stroke="#5d5d5d" stroke-width="2"/><rect x="4" y="9" width="8" height="2" fill="#5d5d5d"/></svg>
<svg style="left:904px;top:568px" width="16" height="20" viewBox="0 0 16 20"><path d="M1 1H15V13.3L8 19.4L1 13.3Z" fill="#2b2b2b" stroke="#5d5d5d" stroke-width="2"/><rect x="4" y="7" width="8" height="2" fill="#5d5d5d"/></svg>
<svg style="left:904px;top:640px" width="16" height="20" viewBox="0 0 16 20"><path d="M1 19V6.7L8 0.6L15 6.7V19Z" fill="#2b2b2b" stroke="#5d5d5d" stroke-width="2"/><rect x="4" y="9" width="8" height="2" fill="#5d5d5d"/></svg>
<div class="a" style="left:982px;top:590px;width:1.5px;height:36px;background:#3b3b3b;"></div>
<div class="a" style="left:1277px;top:594.5px;width:37px;height:27px;background:#353535;border-radius:6px"></div>
<div class="t" style="left:1285.50px;top:595.98px;font-size:24px;color:#8a8a8a;font-weight:normal;letter-spacing:0.5px">s:</div>
<div class="a" style="left:1045.5px;top:666px;width:4px;height:30px;background:#bbbbbb;"></div>
<div class="a" style="left:2056px;top:162px;width:20px;height:20px;background:#c99a1f;"></div>
<div class="a" style="left:2052px;top:334px;width:28px;height:4px;background:#c99a1f;"></div>
<div class="t" style="left:932.50px;top:1844.95px;font-size:24.4px;color:#bbbbbb;font-weight:normal;">ExamplePluginMain</div>
<div class="a" style="left:254.5px;top:1884.5px;width:8.5px;height:8.5px;background:#3d9fc2;border-radius:50%;box-shadow:0 0 0 1px #d8eef5"></div>
</body></html>
